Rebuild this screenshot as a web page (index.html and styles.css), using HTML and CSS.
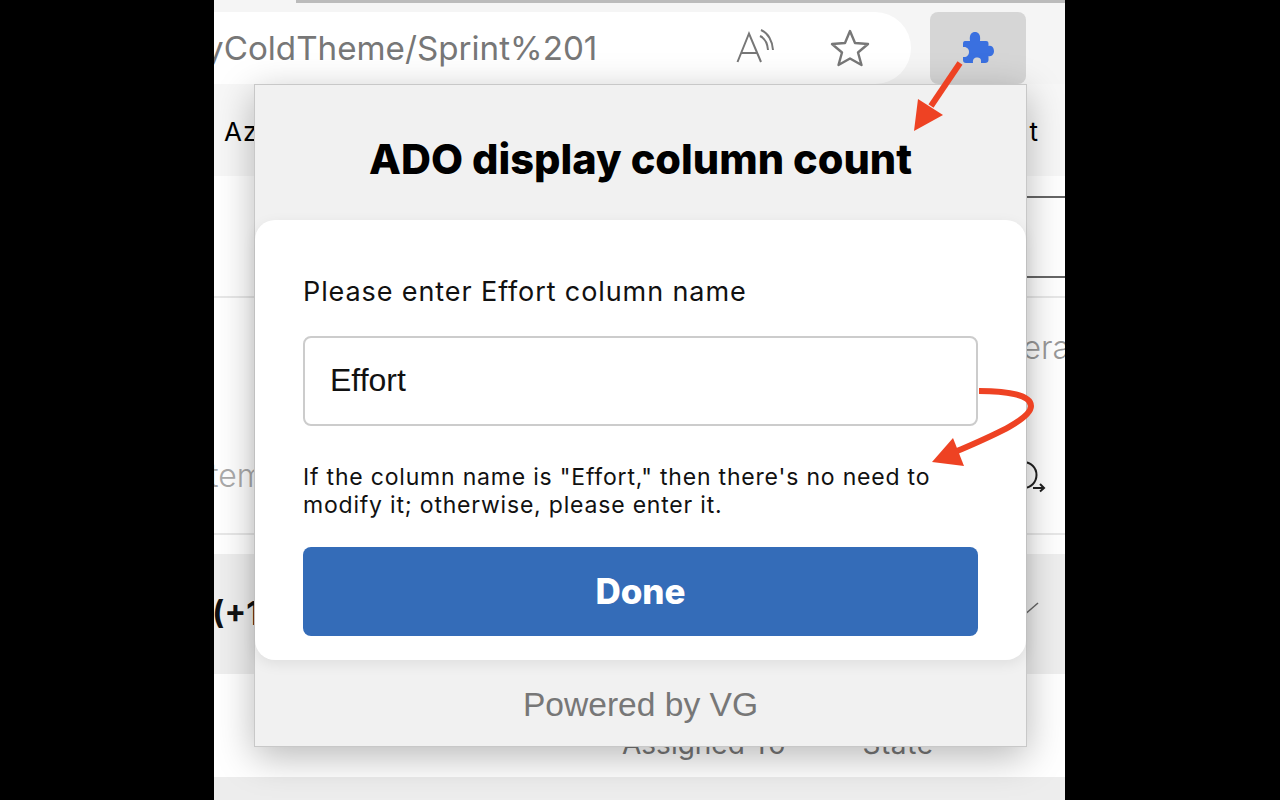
FILE: index.html
```html
<!DOCTYPE html>
<html lang="en">
<head>
    <meta charset="UTF-8">
    <meta name="viewport" content="width=device-width, initial-scale=1.0">
    <title>ADO display column count</title>
    <link rel="stylesheet" href="styles.css">
</head>
<body>
    <div class="stage">
        <div class="top-strip">
            <div class="top-edge"></div>
        </div>
        <div class="toolbar">
            <div class="address">
                <span class="url">yColdTheme/Sprint%201</span>
                <svg class="read-icon" width="40" height="36" viewBox="0 0 40 36" fill="none" stroke="#777" stroke-width="2">
                    <path d="M1.500 33 L13 4.500 L25 33 M5 24 H21"/>
                    <path d="M24 7 C28 9 31.500 14 32 21 M25 1 C32 4 36.500 12 37 21"/>
                </svg>
                <svg class="star-icon" width="40" height="38" viewBox="0 0 40 38" fill="none" stroke="#777" stroke-width="2.400" stroke-linejoin="round">
                    <path d="M20 2 L25 14 L38 15 L28 23.500 L31.500 36 L20 29.500 L8.500 36 L12 23.500 L2 15 L15 14 Z"/>
                </svg>
            </div>
            <div class="ext-button">
                <svg width="34" height="34" viewBox="0 0 34 34" fill="#3a70e0">
                    <path d="M4 10 H9 C8 3 11 1 14 1 C17 1 20 3 19 10 H25 C27 10 27.500 11 27.500 13 V15 C31 13.500 33 17 33 20 C33 23 31 26 27.500 25 V29 C27.500 31 26 32 24 32 H20 C20.500 27 18.500 26.500 16 26.500 C13.500 26.500 11.500 28 12 32 H5 C3 32 2 31 2 29 V26 C6 26.500 8 24 8 21 C8 18 6 15.500 2 16 V13 C2 11 2.500 10 4 10 Z"/>
                </svg>
            </div>
        </div>
        <div class="tabs">
            <span>Azure</span>
            <span>Sprint</span>
        </div>
        <div class="filter-row">
            <div class="filter-line"></div>
        </div>
        <div class="search-row">
            <span class="muted-right">Iteration</span>
        </div>
        <div class="action-row">
            <span class="muted-left">Item</span>
            <svg width="30" height="34" viewBox="0 0 30 34" fill="none" stroke="#222" stroke-width="2">
                <circle cx="5.500" cy="16" r="13"/>
                <path d="M15 29 H26 M22 25 L26 29 L22 32.500"/>
            </svg>
        </div>
        <div class="group-row">
            <b>Story (+1</b>
            <svg class="chevron" width="20" height="16" viewBox="0 0 20 16" fill="none" stroke="#666" stroke-width="1.500"><path d="M2 15 L17 2"/></svg>
        </div>
        <div class="head-row">
            <span class="col-assigned">Assigned To</span>
            <span class="col-state">State</span>
        </div>
        <div class="bottom-band"></div>

        <div class="popup">
            <h1 class="popup-title">ADO display column count</h1>
            <div class="card">
                <label class="field-label" for="effort">Please enter Effort column name</label>
                <input class="field-input" id="effort" type="text" value="Effort">
                <p class="help">If the column name is "Effort," then there's no need to modify it; otherwise, please enter it.</p>
                <button class="done">Done</button>
            </div>
            <div class="powered">Powered by VG</div>
        </div>

        <!-- red annotation arrows -->
        <svg class="arrows" width="851" height="800" viewBox="0 0 851 800" fill="none">
            <path d="M746 63 L717 106" stroke="#ee4223" stroke-width="6"/>
            <path d="M700 131 L704 99 L729 115 Z" fill="#ee4223"/>
            <path d="M765 391 C790 391 817 394 817 406 C817 420 775 437 741 452" stroke="#ee4223" stroke-width="6"/>
            <path d="M718 462 L739 438 L750 466 Z" fill="#ee4223"/>
        </svg>
    </div>
</body>
</html>
```

FILE: styles.css
```css
body {
    margin: 0;
    height: 800px;
    overflow: hidden;
    background-color: #000;
    font-family: "Inter", "Liberation Sans", sans-serif;
}
.stage {
    position: relative;
    width: 851px;
    height: 800px;
    margin-left: 214px;
    overflow: hidden;
    background-color: #fff;
}
.top-strip {
    height: 12px;
    background-color: #f5f5f5;
}
.top-edge {
    height: 3px;
    margin-left: 82px;
    background-color: #bbb;
}
.toolbar {
    display: flex;
    height: 72px;
    background-color: #f5f5f5;
}
.address {
    display: flex;
    align-items: center;
    width: 697px;
    height: 72px;
    border-radius: 0 36px 36px 0;
    background-color: #fff;
}
.url {
    width: 503px;
    margin-left: -9px;
    font-size: 33.2px;
    color: #777;
    white-space: nowrap;
}
.read-icon {
    margin-left: 28px;
    margin-bottom: 2px;
}
.star-icon {
    margin-left: 54px;
}
.ext-button {
    display: flex;
    justify-content: center;
    align-items: flex-start;
    box-sizing: border-box;
    width: 96px;
    height: 72px;
    margin-left: 19px;
    padding-top: 19px;
    border-radius: 8px;
    background-color: #d6d6d6;
}
.tabs {
    display: flex;
    justify-content: space-between;
    align-items: center;
    box-sizing: border-box;
    height: 92px;
    padding: 2px 26px 0 10px;
    font-size: 26px;
    letter-spacing: 1px;
    background-color: #f7f7f7;
}
.filter-row {
    height: 122px;
    border-bottom: 2px solid #e8e8e8;
    box-sizing: border-box;
    padding-top: 20px;
}
.filter-line {
    height: 78px;
    margin-left: 800px;
    border-top: 2px solid #666;
    border-bottom: 2px solid #666;
}
.search-row {
    display: flex;
    justify-content: flex-end;
    align-items: center;
    box-sizing: border-box;
    height: 102px;
    padding-bottom: 4px;
    font-size: 32px;
    font-weight: 300;
    color: #999;
    overflow: hidden;
    white-space: nowrap;
}
.muted-left {
    margin-left: -14px;
}
.muted-right {
    margin-right: -60px;
}
.action-row {
    display: flex;
    justify-content: space-between;
    align-items: center;
    box-sizing: border-box;
    height: 135px;
    padding: 18px 17px 0 0;
    border-bottom: 2px solid #e8e8e8;
    font-size: 32px;
    font-weight: 300;
    color: #aaa;
}
.group-row {
    display: flex;
    justify-content: space-between;
    align-items: center;
    height: 120px;
    margin-top: 19px;
    padding-right: 24px;
    font-size: 32px;
    background-color: #efefef;
    white-space: nowrap;
}
.group-row b {
    margin-left: -94px;
    margin-bottom: 2px;
    color: #111;
}
.chevron {
    margin-bottom: 10px;
}
.head-row {
    display: flex;
    align-items: flex-end;
    height: 103px;
    font-size: 28px;
    color: #777;
}
.col-assigned {
    margin-left: 408px;
    margin-bottom: 16px;
}
.col-state {
    margin-left: 77px;
    margin-bottom: 16px;
    letter-spacing: 0.6px;
}
.bottom-band {
    height: 24px;
    background-color: #ededed;
}
.popup {
    position: absolute;
    left: 40px;
    top: 84px;
    display: flex;
    flex-direction: column;
    box-sizing: border-box;
    width: 773px;
    height: 663px;
    border: 1px solid #c8c8c8;
    background-color: #f1f1f1;
    box-shadow: 0 10px 36px rgba(0, 0, 0, 0.28);
}
.popup-title {
    height: 135px;
    margin: 0;
    padding-top: 50px;
    box-sizing: border-box;
    font-size: 41.5px;
    line-height: 48px;
    font-weight: 800;
    text-align: center;
    color: #000;
}
.card {
    display: flex;
    flex-direction: column;
    box-sizing: border-box;
    height: 440px;
    padding: 54px 48px 0;
    border-radius: 20px;
    background-color: #fff;
    box-shadow: 0 4px 14px rgba(0, 0, 0, 0.08);
}
.field-label {
    font-size: 27px;
    line-height: 36px;
    letter-spacing: 0.9px;
    color: #111;
}
.field-input {
    box-sizing: border-box;
    height: 90px;
    margin-top: 26px;
    padding: 0 25px 2px;
    border: 2px solid #ccc;
    border-radius: 8px;
    font-family: "Liberation Sans", sans-serif;
    font-size: 32px;
    color: #111;
}
.help {
    margin: 37px 0 0;
    font-size: 23px;
    line-height: 28px;
    letter-spacing: 0.8px;
    color: #111;
}
.done {
    height: 89px;
    margin-top: 28px;
    padding-bottom: 3px;
    border: none;
    border-radius: 8px;
    background-color: #346cb8;
    font-family: "Inter", sans-serif;
    font-size: 35px;
    font-weight: 800;
    color: #fff;
}
.powered {
    flex: 1;
    display: flex;
    align-items: center;
    justify-content: center;
    padding-top: 4px;
    font-family: "Liberation Sans", sans-serif;
    font-size: 33.6px;
    color: #777;
}
.arrows {
    position: absolute;
    left: 0;
    top: 0;
}
```
